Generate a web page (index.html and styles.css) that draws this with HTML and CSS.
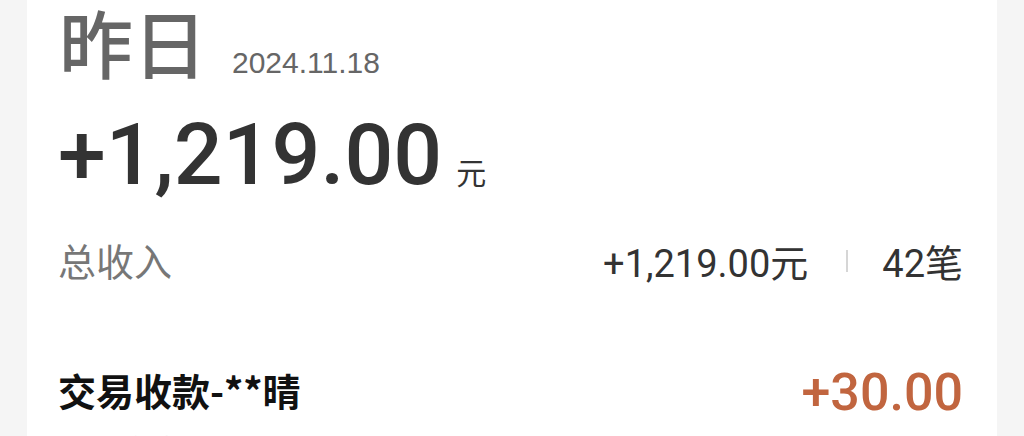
FILE: index.html
```html
<!DOCTYPE html>
<html lang="zh-CN">
<head>
    <meta charset="UTF-8">
    <meta name="viewport" content="width=device-width, initial-scale=1.0">
    <title>收入明细</title>
    <link rel="stylesheet" href="styles.css">
</head>
<body>
    <div class="card">
        <div class="day">
            <span class="day-name">昨日</span>
            <span class="day-date">2024.11.18</span>
        </div>

        <div class="total">
            <span class="total-num">+1,219.00</span>
            <span class="total-unit">元</span>
        </div>

        <div class="summary">
            <span class="summary-label">总收入</span>
            <div class="summary-right">
                <span class="summary-sum">+1,219.00元</span>
                <span class="summary-sep"></span>
                <span class="summary-count">42笔</span>
            </div>
        </div>

        <div class="tx">
            <div class="tx-main">
                <span class="tx-name">交易收款-**晴</span>
                <span class="tx-amount">+30.00</span>
            </div>
            <div class="tx-sub">扫码收款 23:41</div>
        </div>
    </div>
</body>
</html>
```

FILE: styles.css
```css
body {margin: 0; background: #f5f5f5; font-family: "Noto Sans CJK SC", "Noto Sans", sans-serif;}

.card {margin: 0 27px; background: #fff; height: 436px; padding: 0 34px 0 31px; overflow: hidden;}

.day {display: flex; height: 87px;}
.day-name {font-size: 74px; font-weight: 500; color: #666; line-height: 82px; margin-left: 1px;}
.day-date {align-self: flex-end; font-family: "Liberation Sans", Arial, sans-serif; font-size: 30px; line-height: 30px; color: #666; margin-left: 25px; padding-bottom: 9px;}

.total {display: flex; align-items: baseline; height: 110px; margin-top: 13px;}
.total-num {font-family: Roboto, sans-serif; font-size: 86px; font-weight: 500; color: #333; line-height: 110px;}
.total-unit {font-size: 30px; color: #333; margin-left: 14px;}

.summary {display: flex; justify-content: space-between; align-items: center; height: 70px; margin-top: 14px;}
.summary-label {font-size: 38px; color: #777;}
.summary-right {display: flex; align-items: center; padding-top: 3px;}
.summary-sum, .summary-count {font-family: Roboto, "Noto Sans CJK SC", sans-serif; font-size: 38px; color: #333;}
.summary-sep {width: 2px; height: 22px; background: #d6d6d6; margin: 0 34px 0 38px;}

.tx {margin-top: 66px;}
.tx-main {display: flex; justify-content: space-between; align-items: center; height: 64px;}
.tx-name {font-size: 38px; font-weight: 700; color: #111; padding-bottom: 6px;}
.tx-amount {font-family: Roboto, sans-serif; font-size: 52px; font-weight: 500; color: #c1653f;}
.tx-sub {font-size: 30px; line-height: 40px; color: #ddd; margin-top: 4px;}
```
